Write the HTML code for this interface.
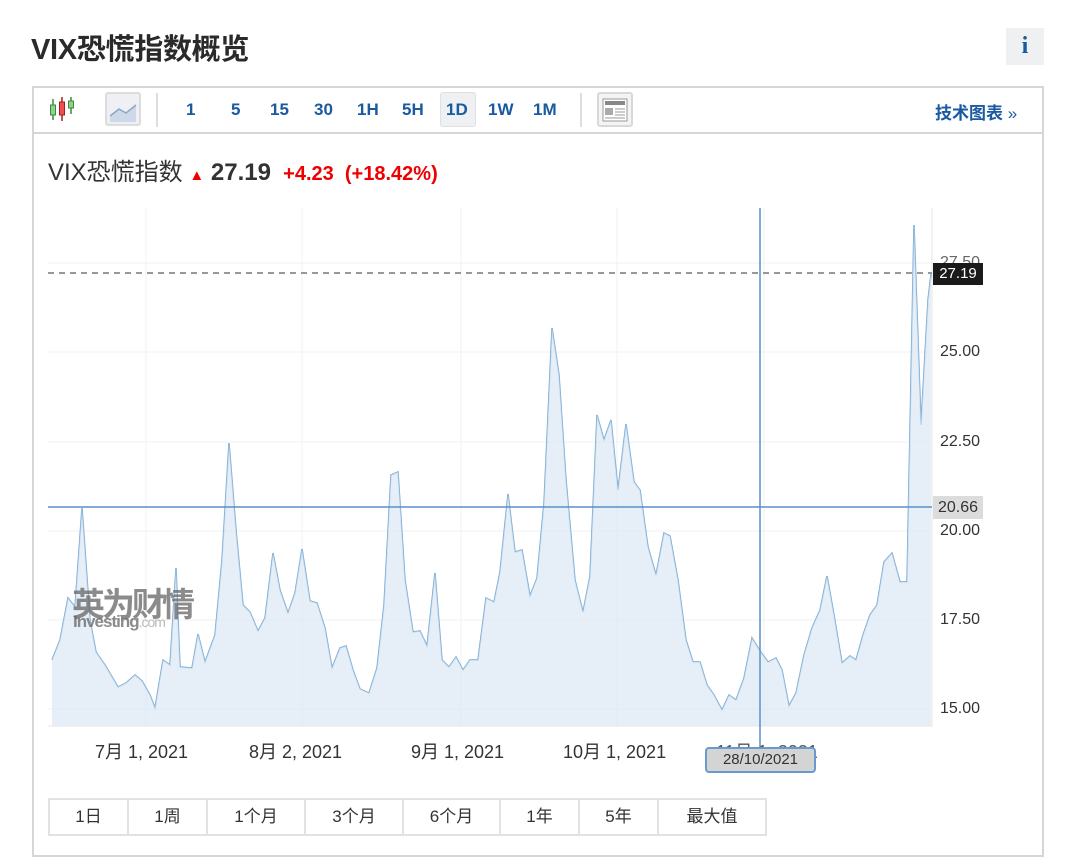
<!DOCTYPE html>
<html><head><meta charset="utf-8"><style>
*{margin:0;padding:0;box-sizing:border-box}
body{width:1080px;height:868px;background:#fff;font-family:"Liberation Sans","Noto Sans CJK SC",sans-serif;position:relative;overflow:hidden;color:#333}
.abs{position:absolute}
h1{position:absolute;left:31px;top:26px;font-size:29px;font-weight:bold;color:#2a2a2a;letter-spacing:-0.3px}
.info{left:1006px;top:28px;width:38px;height:37px;background:#eef0f2;color:#1a5aa0;font-family:"Liberation Serif",serif;font-weight:bold;font-size:24px;text-align:center;line-height:37px}
.box{left:32px;top:86px;width:1012px;height:771px;border:2px solid #d6d6d6}
.tb{left:33px;top:87px;width:1010px;height:47px;border-bottom:2px solid #d6d6d6}
.tf{top:100px;font-size:17px;font-weight:bold;color:#1a5aa0}
.sep{width:2px;height:34px;background:#ddd;top:93px}
.rb{top:798px;height:38px;border:2px solid #e2e2e2;font-size:17px;color:#333;text-align:center;line-height:34px}
.yl{left:940px;font-size:16px;color:#333}
.xl{top:738px;font-size:18px;color:#333}
</style></head><body>
<h1>VIX恐慌指数概览</h1>
<div class="abs info">i</div>
<div class="abs box"></div>
<div class="abs tb"></div>
<svg class="abs" style="left:48px;top:96px" width="30" height="26" viewBox="0 0 30 26">
<line x1="5" y1="3" x2="5" y2="24" stroke="#3a8a3a" stroke-width="1.5"/><rect x="2.5" y="9" width="5" height="10" fill="#8fd08f" stroke="#3a8a3a"/>
<line x1="14" y1="1" x2="14" y2="25" stroke="#a02020" stroke-width="1.5"/><rect x="11.5" y="6" width="5" height="13" fill="#f05050" stroke="#a02020"/>
<line x1="23" y1="1" x2="23" y2="18" stroke="#3a8a3a" stroke-width="1.5"/><rect x="20.5" y="5" width="5" height="7" fill="#8fd08f" stroke="#3a8a3a"/>
</svg>
<div class="abs" style="left:105px;top:92px;width:36px;height:34px;border:2px solid #dcdcdc;border-radius:3px;background:#eef0f3"></div>
<svg class="abs" style="left:109px;top:100px" width="28" height="22"><path d="M1 16 L10 9 L17 13 L27 5 L27 22 L1 22Z" fill="#cdd8e8"/><path d="M1 16 L10 9 L17 13 L27 5" stroke="#8aa6c8" fill="none" stroke-width="1.5"/></svg>
<div class="abs sep" style="left:156px"></div>
<div class="abs tf" style="left:186px">1</div>
<div class="abs tf" style="left:231px">5</div>
<div class="abs tf" style="left:270px">15</div>
<div class="abs tf" style="left:314px">30</div>
<div class="abs tf" style="left:357px">1H</div>
<div class="abs tf" style="left:402px">5H</div>
<div class="abs" style="left:440px;top:92px;width:36px;height:35px;background:#eef0f3;border:1px solid #e0e0e0;border-radius:3px"></div>
<div class="abs tf" style="left:446px">1D</div>
<div class="abs tf" style="left:488px">1W</div>
<div class="abs tf" style="left:533px">1M</div>
<div class="abs sep" style="left:580px"></div>
<div class="abs" style="left:597px;top:92px;width:36px;height:35px;border:2px solid #d8d8d8;border-radius:3px;background:#f4f4f4"></div>
<svg class="abs" style="left:602px;top:98px" width="26" height="24"><rect x="1" y="1" width="24" height="22" fill="#fff" stroke="#999"/><rect x="3" y="3" width="20" height="4" fill="#888"/><rect x="3" y="10" width="8" height="7" fill="#aaa"/><path d="M13 11h10M13 14h10M13 17h10M3 20h20" stroke="#999"/></svg>
<div class="abs" style="left:935px;top:99px;font-size:17px;font-weight:bold;color:#1a5aa0">技术图表 <span style="font-weight:normal">»</span></div>
<div class="abs" style="left:48px;top:152px;font-size:24px;color:#333;white-space:nowrap">VIX恐慌指数 <span style="color:#e00;font-size:15px">&#9650;</span> <b style="font-size:24px">27.19</b> <span style="color:#e00;font-weight:bold;font-size:20px">&nbsp;+4.23 &nbsp;(+18.42%)</span></div>
<svg class="abs" style="left:0;top:0" width="1080" height="868">
<g stroke="#f0f0f0" stroke-width="1">
<line x1="146" y1="208" x2="146" y2="726"/><line x1="302" y1="208" x2="302" y2="726"/><line x1="461" y1="208" x2="461" y2="726"/><line x1="617" y1="208" x2="617" y2="726"/><line x1="764" y1="208" x2="764" y2="726"/>
<line x1="48" y1="263" x2="932" y2="263"/><line x1="48" y1="352" x2="932" y2="352"/><line x1="48" y1="442" x2="932" y2="442"/><line x1="48" y1="531" x2="932" y2="531"/><line x1="48" y1="620" x2="932" y2="620"/><line x1="48" y1="709" x2="932" y2="709"/>
</g>
<line x1="932" y1="208" x2="932" y2="726" stroke="#e6e6e6"/>
<line x1="48" y1="726" x2="932" y2="726" stroke="#e6e6e6"/>
<path d="M52,660 L60,640 L68,598 L75,607 L82,508 L90,620 L96,652 L105,665 L118,687 L126,683 L135,675 L142,681 L150,695 L155,708 L163,660 L170,665 L176,568 L180,667 L192,668 L198,634 L205,662 L215,635 L222,560 L229,443 L236,530 L243,605 L250,612 L258,631 L265,618 L273,553 L280,590 L288,613 L295,593 L302,549 L310,601 L317,603 L325,628 L332,668 L340,648 L346,646 L353,670 L360,689 L369,693 L377,668 L384,605 L391,475 L398,472 L405,580 L413,632 L420,631 L427,646 L435,573 L442,660 L449,667 L456,657 L463,670 L470,660 L478,660 L486,598 L494,602 L500,572 L508,494 L515,552 L522,550 L530,596 L537,578 L544,503 L552,328 L559,375 L566,480 L575,580 L583,612 L590,576 L597,415 L604,440 L611,420 L618,490 L626,424 L634,482 L640,490 L648,547 L656,575 L664,533 L670,536 L678,580 L686,640 L693,662 L700,662 L707,685 L714,695 L722,710 L729,695 L736,700 L744,678 L752,638 L760,651 L768,662 L776,658 L782,670 L789,706 L796,693 L804,655 L812,628 L820,610 L827,576 L834,615 L842,663 L850,656 L856,660 L863,635 L870,615 L877,605 L884,562 L892,553 L900,582 L907,582 L914,225 L921,425 L928,300 L931,274" fill="none" stroke="#7aaad4" stroke-width="1.5"/>
<path d="M52,726 L52,660 L60,640 L68,598 L75,607 L82,508 L90,620 L96,652 L105,665 L118,687 L126,683 L135,675 L142,681 L150,695 L155,708 L163,660 L170,665 L176,568 L180,667 L192,668 L198,634 L205,662 L215,635 L222,560 L229,443 L236,530 L243,605 L250,612 L258,631 L265,618 L273,553 L280,590 L288,613 L295,593 L302,549 L310,601 L317,603 L325,628 L332,668 L340,648 L346,646 L353,670 L360,689 L369,693 L377,668 L384,605 L391,475 L398,472 L405,580 L413,632 L420,631 L427,646 L435,573 L442,660 L449,667 L456,657 L463,670 L470,660 L478,660 L486,598 L494,602 L500,572 L508,494 L515,552 L522,550 L530,596 L537,578 L544,503 L552,328 L559,375 L566,480 L575,580 L583,612 L590,576 L597,415 L604,440 L611,420 L618,490 L626,424 L634,482 L640,490 L648,547 L656,575 L664,533 L670,536 L678,580 L686,640 L693,662 L700,662 L707,685 L714,695 L722,710 L729,695 L736,700 L744,678 L752,638 L760,651 L768,662 L776,658 L782,670 L789,706 L796,693 L804,655 L812,628 L820,610 L827,576 L834,615 L842,663 L850,656 L856,660 L863,635 L870,615 L877,605 L884,562 L892,553 L900,582 L907,582 L914,225 L921,425 L928,300 L931,274 L931,726Z" fill="#dde9f4" fill-opacity="0.75"/>
<line x1="48" y1="273" x2="932" y2="273" stroke="#777" stroke-width="1.5" stroke-dasharray="6,5"/>
<line x1="48" y1="507" x2="932" y2="507" stroke="#5a8fc8" stroke-width="1.5"/>
<line x1="760" y1="208" x2="760" y2="760" stroke="#5a8fc8" stroke-width="1.5"/>
</svg>
<div class="abs" style="left:72px;top:578px;font-size:33px;font-weight:bold;color:rgba(100,100,100,0.75);letter-spacing:-3px">英为财情</div>
<div class="abs" style="left:73px;top:612px;font-size:17px;font-weight:bold;color:rgba(100,100,100,0.75);letter-spacing:-1px">Investing<span style="font-weight:normal;font-size:14px;color:rgba(140,140,140,0.6)">.com</span></div>
<div class="abs yl" style="top:254px;color:#666">27.50</div>
<div class="abs" style="left:933px;top:263px;width:50px;height:22px;background:#1a1a1a;color:#fff;font-size:15px;line-height:22px;text-align:center">27.19</div>
<div class="abs yl" style="top:343px">25.00</div>
<div class="abs yl" style="top:433px">22.50</div>
<div class="abs" style="left:933px;top:496px;width:50px;height:23px;background:#dcdcdc;color:#333;font-size:16px;line-height:23px;text-align:center">20.66</div>
<div class="abs yl" style="top:522px">20.00</div>
<div class="abs yl" style="top:611px">17.50</div>
<div class="abs yl" style="top:700px">15.00</div>
<div class="abs xl" style="left:95px">7月 1, 2021</div>
<div class="abs xl" style="left:249px">8月 2, 2021</div>
<div class="abs xl" style="left:411px">9月 1, 2021</div>
<div class="abs xl" style="left:563px">10月 1, 2021</div>
<div class="abs xl" style="left:716px;color:#555">11月 1, 2021</div>
<div class="abs" style="left:705px;top:747px;width:111px;height:26px;background:#d4d4d4;border:2px solid #6a9acc;border-radius:4px;font-size:15px;text-align:center;line-height:22px;color:#333">28/10/2021</div>
<div class="abs rb" style="left:48px;width:81px">1日</div>
<div class="abs rb" style="left:127px;width:81px">1周</div>
<div class="abs rb" style="left:206px;width:100px">1个月</div>
<div class="abs rb" style="left:304px;width:100px">3个月</div>
<div class="abs rb" style="left:402px;width:99px">6个月</div>
<div class="abs rb" style="left:499px;width:81px">1年</div>
<div class="abs rb" style="left:578px;width:81px">5年</div>
<div class="abs rb" style="left:657px;width:110px">最大值</div>
</body></html>
